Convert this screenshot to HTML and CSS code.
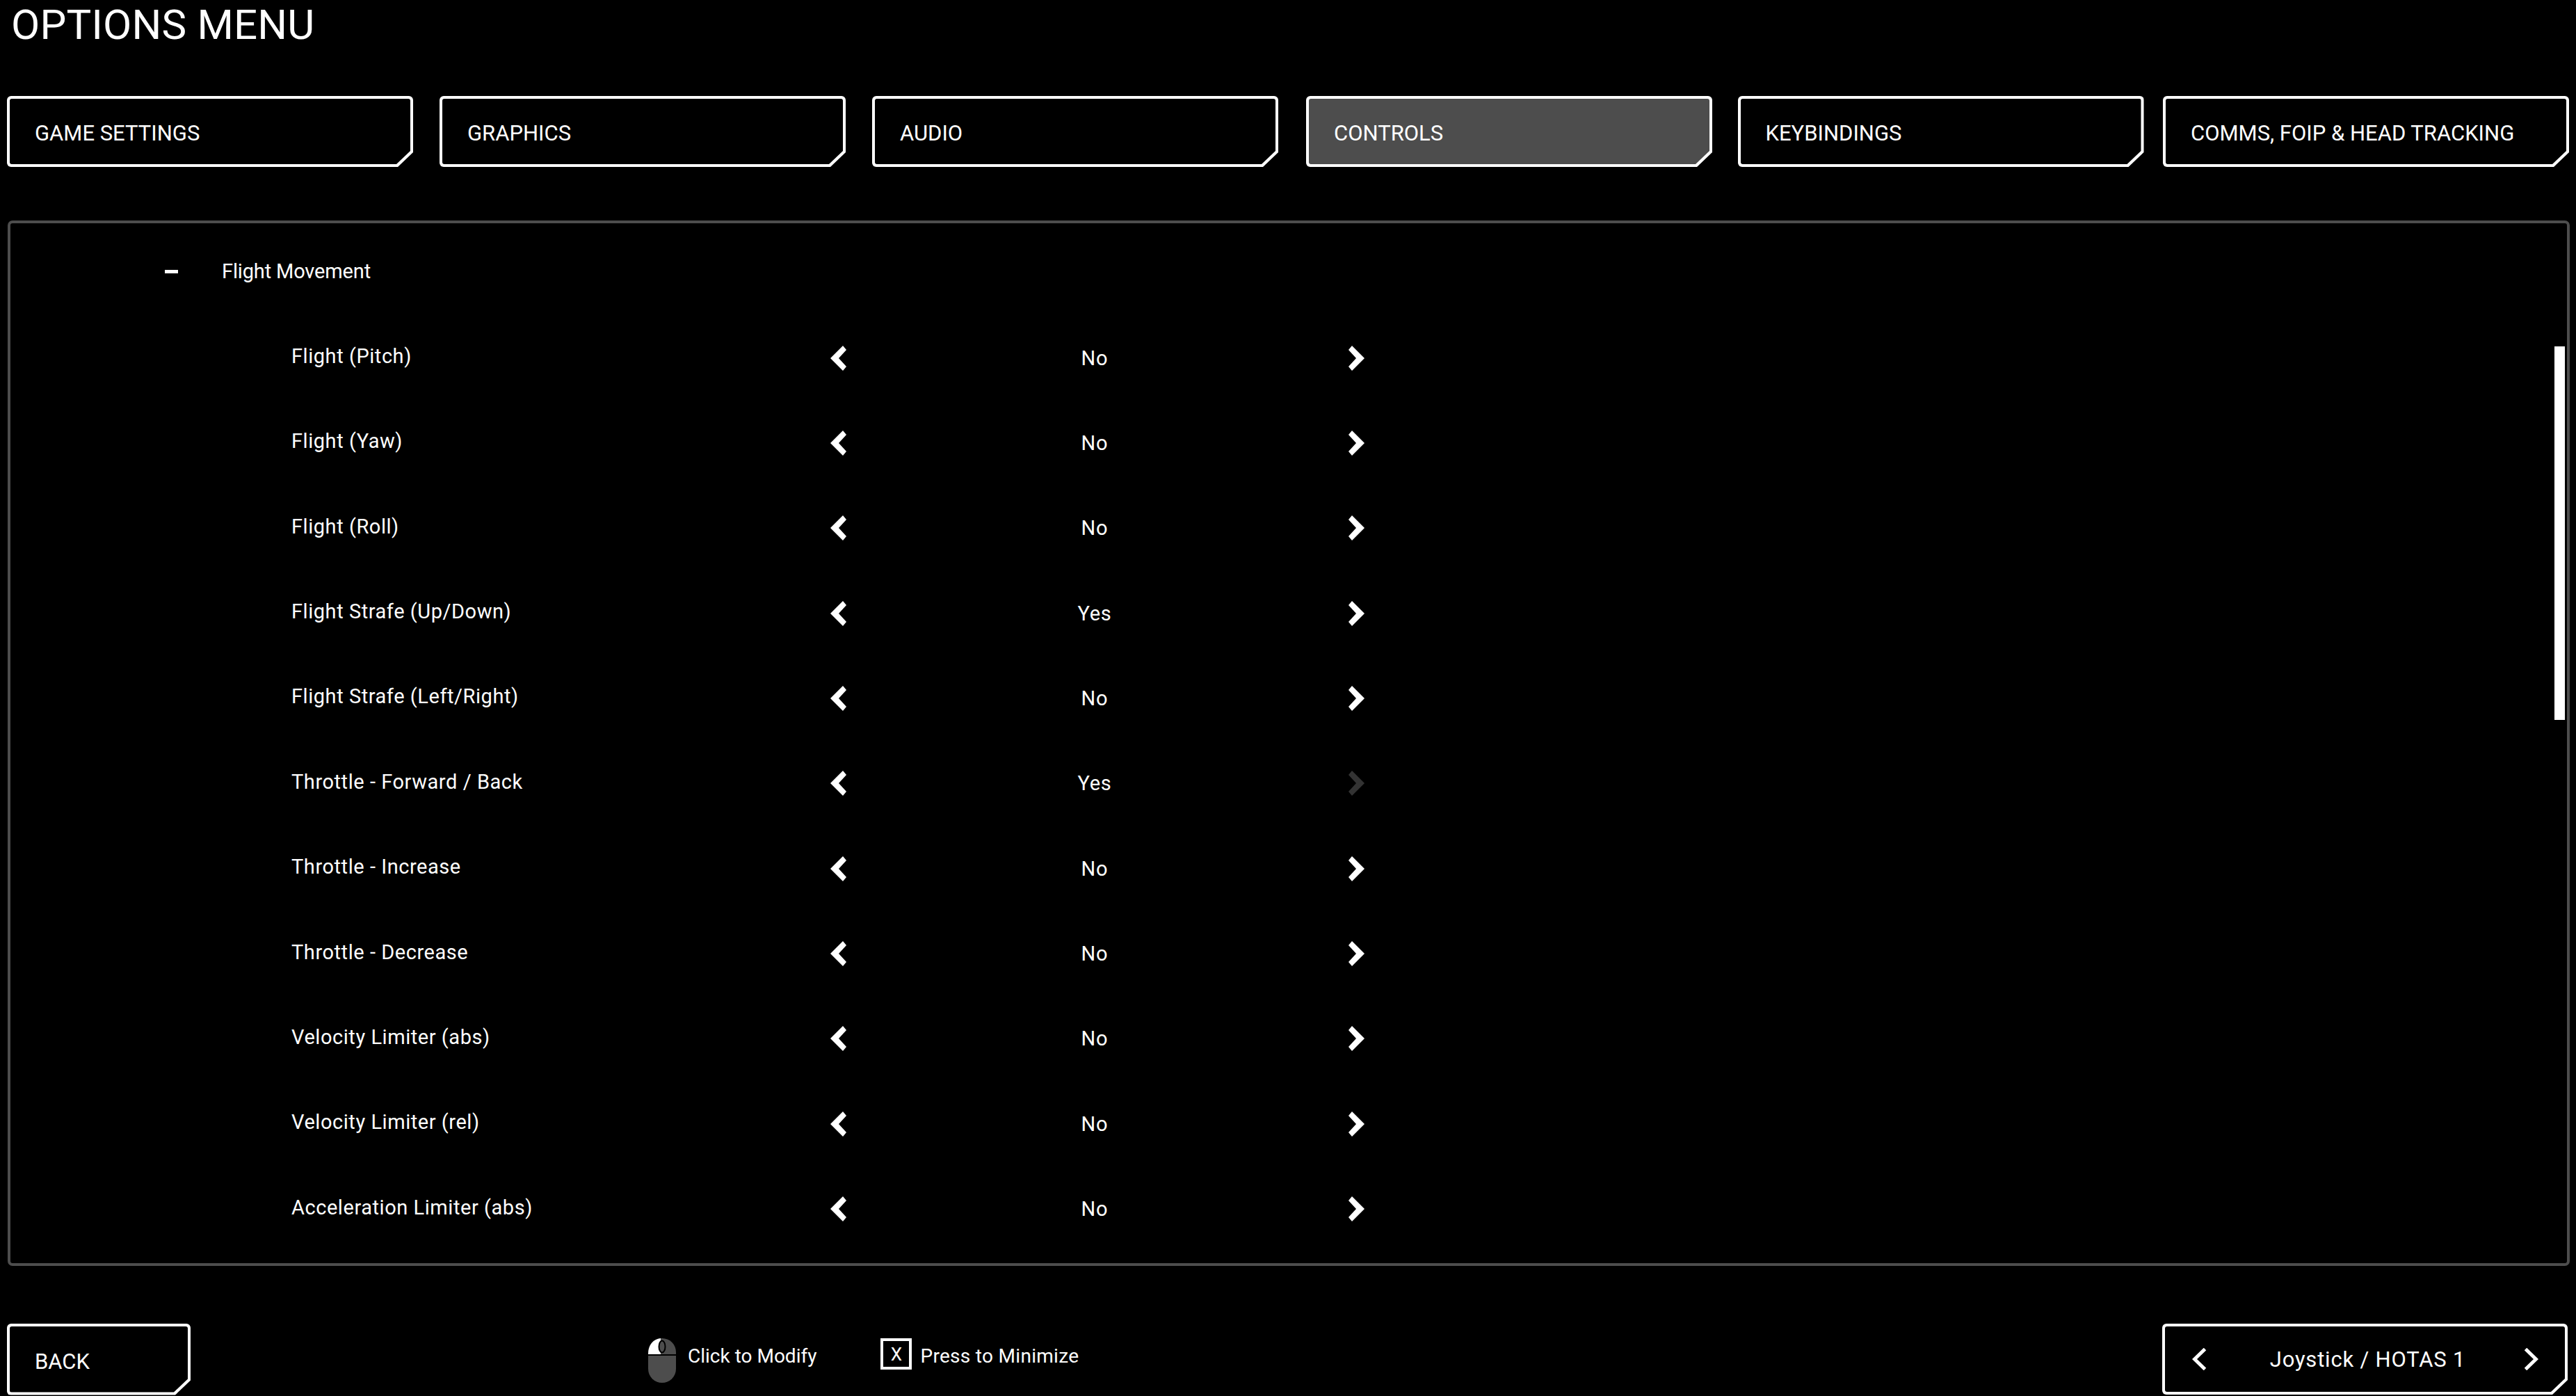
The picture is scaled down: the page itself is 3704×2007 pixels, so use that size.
FILE: index.html
```html
<!DOCTYPE html>
<html lang="en">
<head>
<meta charset="utf-8">
<title>Options Menu</title>
<link rel="stylesheet" href="styles.css">
</head>
<body>
<svg class="defs" width="0" height="0" aria-hidden="true">
  <symbol id="chev-left" viewBox="0 0 25 36"><path d="M1 18 19 0l5 6-11 12 11 12-5 6z"/></symbol>
  <symbol id="chev-right" viewBox="0 0 25 36"><path d="M24 18 6 36l-5-6 11-12L1 6l5-6z"/></symbol>
</svg>
<div class="page">
  <h1 class="title">OPTIONS MENU</h1>
  <nav class="tabs">
    <div class="cut-btn tab"><span>GAME SETTINGS</span></div>
    <div class="cut-btn tab"><span>GRAPHICS</span></div>
    <div class="cut-btn tab"><span>AUDIO</span></div>
    <div class="cut-btn tab active"><span>CONTROLS</span></div>
    <div class="cut-btn tab"><span>KEYBINDINGS</span></div>
    <div class="cut-btn tab"><span>COMMS, FOIP &amp; HEAD TRACKING</span></div>
  </nav>
  <main class="panel">
    <div class="thumb"></div>
    <div class="group-row"><span class="minus"></span><span class="group-label">Flight Movement</span></div>
    <div class="row"><span class="label">Flight (Pitch)</span><svg class="chev"><use href="#chev-left"/></svg><span class="value">No</span><svg class="chev"><use href="#chev-right"/></svg></div>
    <div class="row"><span class="label">Flight (Yaw)</span><svg class="chev"><use href="#chev-left"/></svg><span class="value">No</span><svg class="chev"><use href="#chev-right"/></svg></div>
    <div class="row"><span class="label">Flight (Roll)</span><svg class="chev"><use href="#chev-left"/></svg><span class="value">No</span><svg class="chev"><use href="#chev-right"/></svg></div>
    <div class="row"><span class="label">Flight Strafe (Up/Down)</span><svg class="chev"><use href="#chev-left"/></svg><span class="value">Yes</span><svg class="chev"><use href="#chev-right"/></svg></div>
    <div class="row"><span class="label">Flight Strafe (Left/Right)</span><svg class="chev"><use href="#chev-left"/></svg><span class="value">No</span><svg class="chev"><use href="#chev-right"/></svg></div>
    <div class="row"><span class="label">Throttle - Forward / Back</span><svg class="chev"><use href="#chev-left"/></svg><span class="value">Yes</span><svg class="chev dim"><use href="#chev-right"/></svg></div>
    <div class="row"><span class="label">Throttle - Increase</span><svg class="chev"><use href="#chev-left"/></svg><span class="value">No</span><svg class="chev"><use href="#chev-right"/></svg></div>
    <div class="row"><span class="label">Throttle - Decrease</span><svg class="chev"><use href="#chev-left"/></svg><span class="value">No</span><svg class="chev"><use href="#chev-right"/></svg></div>
    <div class="row"><span class="label">Velocity Limiter (abs)</span><svg class="chev"><use href="#chev-left"/></svg><span class="value">No</span><svg class="chev"><use href="#chev-right"/></svg></div>
    <div class="row"><span class="label">Velocity Limiter (rel)</span><svg class="chev"><use href="#chev-left"/></svg><span class="value">No</span><svg class="chev"><use href="#chev-right"/></svg></div>
    <div class="row"><span class="label">Acceleration Limiter (abs)</span><svg class="chev"><use href="#chev-left"/></svg><span class="value">No</span><svg class="chev"><use href="#chev-right"/></svg></div>
  </main>
  <footer class="footer">
    <div class="cut-btn back"><span>BACK</span></div>
    <div class="hint mouse-hint">
      <svg class="mouse" viewBox="0 0 40 64">
        <rect width="40" height="64" rx="20" fill="#4d4d4d"/>
        <path d="M18 0C7 1 0 10 0 23h18z" fill="#fff"/>
        <rect y="23" width="40" height="2" fill="#000"/>
        <ellipse cx="20" cy="12" rx="4.500" ry="8.500" fill="#4d4d4d" stroke="#000" stroke-width="2"/>
      </svg>
      <span class="hint-text">Click to Modify</span>
    </div>
    <div class="hint key-hint"><span class="key">X</span><span class="hint-text spaced">Press to Minimize</span></div>
    <div class="cut-btn device">
      <svg class="big-chev" viewBox="0 0 21 32"><path d="M18.500 1.500 3.500 16l15 14.500"/></svg>
      <span class="device-name">Joystick / HOTAS 1</span>
      <svg class="big-chev" viewBox="0 0 21 32"><path d="M2.500 1.500 17.500 16l-15 14.500"/></svg>
    </div>
  </footer>
</div>
</body>
</html>
```
FILE: styles.css
```css
* { box-sizing: border-box; }
html, body { margin: 0; padding: 0; background: #000; }
body { color: #fff; font-family: Roboto, "Liberation Sans", sans-serif; overflow: hidden; }
.defs { position: absolute; }
.page { width: 3704px; height: 2007px; display: flex; flex-direction: column; overflow: hidden; }

.title { margin: 0; height: 138px; padding: 0 0 0 16px; font-size: 60px; line-height: 71px; font-weight: 400; letter-spacing: .2px; }

.tabs { display: flex; padding-left: 10px; margin-bottom: 77px; }

.cut-btn {
  position: relative;
  display: flex;
  align-items: center;
  background: #fff;
  border-radius: 6px;
  clip-path: polygon(0 0, 100% 0, 100% calc(100% - 21px), calc(100% - 22px) 100%, 0 100%);
  font-size: 31px;
}
.cut-btn::before {
  content: "";
  position: absolute;
  inset: 4px;
  border-radius: 3px;
  background: #000;
  clip-path: polygon(0 0, 100% 0, 100% calc(100% - 19px), calc(100% - 20px) 100%, 0 100%);
}
.cut-btn > * { position: relative; }

.tab { width: 584px; height: 102px; margin-right: 38px; padding: 4px 0 0 40px; }
.tab:nth-child(3) { margin-right: 40px; }
.tab:nth-child(4) { margin-right: 36.5px; }
.tab:nth-child(5) { margin-right: 27.5px; }
.tab:last-child { margin-right: 0; }
.tab.active::before { background: #4d4d4d; }

.panel { position: relative; height: 1503px; margin: 0 9px 0 11px; padding-top: 8px; border: 4px solid #4d4d4d; border-radius: 7px; overflow: hidden; }
.thumb { position: absolute; top: 177px; right: 3px; width: 15px; height: 537px; background: #fff; }

.group-row { display: flex; align-items: center; height: 122.36px; margin-bottom: 2px; padding-left: 222px; font-size: 29px; }
.group-label { letter-spacing: -.15px; }
.minus { width: 19px; height: 5px; margin-right: 63px; background: #fff; }
.row { display: grid; grid-template-columns: 774px 25px 720px 25px; align-items: center; height: 122.36px; padding-left: 404px; font-size: 29px; }
.label { padding-bottom: 5px; letter-spacing: .55px; }
.value { text-align: center; padding-right: 8px; letter-spacing: .8px; }
.chev { width: 25px; height: 36px; fill: #fff; }
.chev.dim { fill: #333; }

.footer { display: flex; align-items: center; height: 104px; margin-top: 82px; padding-left: 10px; font-size: 28px; }
.back { width: 264px; height: 103px; padding: 6px 0 0 40px; }
.hint { display: flex; align-items: center; }
.hint-text { padding-bottom: 10px; }
.hint-text.spaced { letter-spacing: .3px; }
.mouse-hint { margin-left: 658px; }
.mouse { width: 40px; height: 64px; margin: 4px 17px 0 0; }
.key-hint { margin-left: 93px; }
.key { display: flex; align-items: center; justify-content: center; width: 45px; height: 45px; margin: 0 12px 15px -1px; border: 4px solid #fff; font-size: 26px; }
.device { justify-content: space-between; width: 583px; height: 102px; margin-left: auto; margin-right: 12px; padding: 0 42px 0 43px; font-size: 31px; }
.device-name { margin-left: 7px; letter-spacing: .8px; }
.big-chev { width: 21px; height: 32px; fill: none; stroke: #fff; stroke-width: 5; }
```
